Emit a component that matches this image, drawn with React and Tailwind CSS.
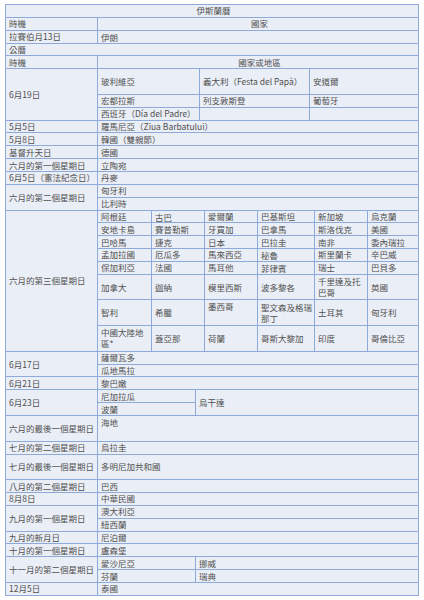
import React from "react";
import clsx from "clsx";

// one unit row ≈ 12.85px in the screenshot, tall rows are two units
function Cell({ className = "", top = false, children }) {
  return (
    <div
      className={clsx(
        "flex overflow-hidden whitespace-nowrap border-r border-b border-[#8eaadb] pl-[3px] leading-[11px]",
        top ? "items-start pt-[1px]" : "items-center",
        className
      )}
    >
      <span>{children}</span>
    </div>
  );
}

function Row({ tall, children }) {
  return <div className={clsx("flex", tall ? "h-[25.7px]" : "h-[12.85px]")}>{children}</div>;
}

function Label({ children }) {
  return <Cell className="w-[92px] shrink-0 pl-[1px]">{children}</Cell>;
}

// label on the left spanning several sub rows on the right
function Group({ label, children }) {
  return (
    <div className="flex">
      <Label>{label}</Label>
      <div className="flex flex-1 flex-col">{children}</div>
    </div>
  );
}

function Simple({ label, value, tall, top }) {
  return (
    <Row tall={tall}>
      <Label>{label}</Label>
      <Cell className="flex-1" top={top}>{value}</Cell>
    </Row>
  );
}

const thirdSunday = [
  [["阿根廷"], ["古巴", 1], ["愛爾蘭"], ["巴基斯坦"], ["新加坡"], ["烏克蘭"]],
  [["安地卡島"], ["賽普勒斯"], ["牙買加"], ["巴拿馬", 1], ["斯洛伐克"], ["美國"]],
  [["巴哈馬"], ["捷克"], ["日本"], ["巴拉圭"], ["南非"], ["委內瑞拉"]],
  [["孟加拉國"], ["厄瓜多"], ["馬來西亞"], ["秘魯", 1], ["斯里蘭卡"], ["辛巴威"]],
  [["保加利亞"], ["法國"], ["馬耳他"], ["菲律賓", 1], ["瑞士"], ["巴貝多"]],
];

const colW = ["w-[54px] shrink-0", "w-[53px] shrink-0", "w-[53px] shrink-0", "w-[57px] shrink-0", "w-[53px] shrink-0", "flex-1"];

export default function App() {
  return (
    <div className="min-h-[600px] bg-white pt-[4px] pl-[5px] font-['Noto_Sans_CJK_TC','Liberation_Sans',sans-serif] text-[8.5px] text-[#505050]">
      <div className="w-[414px] border-t border-l border-[#8eaadb] bg-[#eaeef6]">
        <Row>
          <Cell className="flex-1 justify-center">伊斯蘭曆</Cell>
        </Row>
        <Row>
          <Label>時機</Label>
          <Cell className="flex-1 justify-center">國家</Cell>
        </Row>
        <Simple label="拉賽伯月13日" value="伊朗" top />
        <Row>
          <Cell className="flex-1 pl-[1px]">公曆</Cell>
        </Row>
        <Row>
          <Label>時機</Label>
          <Cell className="flex-1 justify-center">國家或地區</Cell>
        </Row>

        <Group label="6月19日">
          <Row tall>
            <Cell className="w-[102px] shrink-0">玻利維亞</Cell>
            <Cell className="w-[110px] shrink-0">義大利（Festa del Papà）</Cell>
            <Cell className="flex-1">安道爾</Cell>
          </Row>
          <Row>
            <Cell className="w-[102px] shrink-0">宏都拉斯</Cell>
            <Cell className="w-[110px] shrink-0">列支敦斯登</Cell>
            <Cell className="flex-1">葡萄牙</Cell>
          </Row>
          <Row>
            <Cell className="w-[102px] shrink-0 pl-[2px]">西班牙（Día del Padre）</Cell>
            <Cell className="w-[110px] shrink-0" />
            <Cell className="flex-1" />
          </Row>
        </Group>

        <Simple label="5月5日" value="羅馬尼亞（Ziua Barbatului）" />
        <Simple label="5月8日" value="韓國（雙親節）" />
        <Simple label="基督升天日" value="德國" />
        <Simple label="六月的第一個星期日" value="立陶宛" />
        <Simple label="6月5日（憲法紀念日）" value="丹麥" />

        <Group label="六月的第二個星期日">
          <Row><Cell className="flex-1">匈牙利</Cell></Row>
          <Row><Cell className="flex-1">比利時</Cell></Row>
        </Group>

        <Group label="六月的第三個星期日">
          {thirdSunday.map((r, i) => (
            <Row key={i}>
              {r.map(([name, top], j) => (
                <Cell key={j} className={colW[j]} top={!!top}>{name}</Cell>
              ))}
            </Row>
          ))}
          <Row tall>
            <Cell className={colW[0]}>加拿大</Cell>
            <Cell className={colW[1]}>迦納</Cell>
            <Cell className={colW[2]}>模里西斯</Cell>
            <Cell className={colW[3]}>波多黎各</Cell>
            <Cell className={colW[4]}>千里達及托<br />巴哥</Cell>
            <Cell className={colW[5]}>英國</Cell>
          </Row>
          <Row tall>
            <Cell className={colW[0]}>智利</Cell>
            <Cell className={colW[1]}>希臘</Cell>
            <Cell className={colW[2]} top>墨西哥</Cell>
            <Cell className={clsx(colW[3], "pl-[1px]")}>聖文森及格瑞<br />那丁</Cell>
            <Cell className={colW[4]}>土耳其</Cell>
            <Cell className={colW[5]}>匈牙利</Cell>
          </Row>
          <Row tall>
            <Cell className={colW[0]}>中國大陸地<br />區*</Cell>
            <Cell className={colW[1]}>蓋亞那</Cell>
            <Cell className={colW[2]}>荷蘭</Cell>
            <Cell className={colW[3]}>哥斯大黎加</Cell>
            <Cell className={colW[4]}>印度</Cell>
            <Cell className={colW[5]}>哥倫比亞</Cell>
          </Row>
        </Group>

        <Group label="6月17日">
          <Row><Cell className="flex-1">薩爾瓦多</Cell></Row>
          <Row><Cell className="flex-1">瓜地馬拉</Cell></Row>
        </Group>
        <Simple label="6月21日" value="黎巴嫩" />

        <div className="flex">
          <Label>6月23日</Label>
          <div className="flex w-[98px] shrink-0 flex-col">
            <Row><Cell className="flex-1">尼加拉瓜</Cell></Row>
            <Row><Cell className="flex-1">波蘭</Cell></Row>
          </div>
          <Cell className="flex-1">烏干達</Cell>
        </div>

        <Simple label="六月的最後一個星期日" value="海地" tall top />
        <Simple label="七月的第二個星期日" value="烏拉圭" />
        <Simple label="七月的最後一個星期日" value="多明尼加共和國" tall />
        <Simple label="八月的第二個星期日" value="巴西" />
        <Simple label="8月8日" value="中華民國" />

        <Group label="九月的第一個星期日">
          <Row><Cell className="flex-1">澳大利亞</Cell></Row>
          <Row><Cell className="flex-1">紐西蘭</Cell></Row>
        </Group>
        <Simple label="九月的新月日" value="尼泊爾" />
        <Simple label="十月的第一個星期日" value="盧森堡" />

        <Group label="十一月的第二個星期日">
          <Row>
            <Cell className="w-[98px] shrink-0">愛沙尼亞</Cell>
            <Cell className="flex-1">挪威</Cell>
          </Row>
          <Row>
            <Cell className="w-[98px] shrink-0">芬蘭</Cell>
            <Cell className="flex-1">瑞典</Cell>
          </Row>
        </Group>
        <Simple label="12月5日" value="泰國" />
      </div>
    </div>
  );
}
